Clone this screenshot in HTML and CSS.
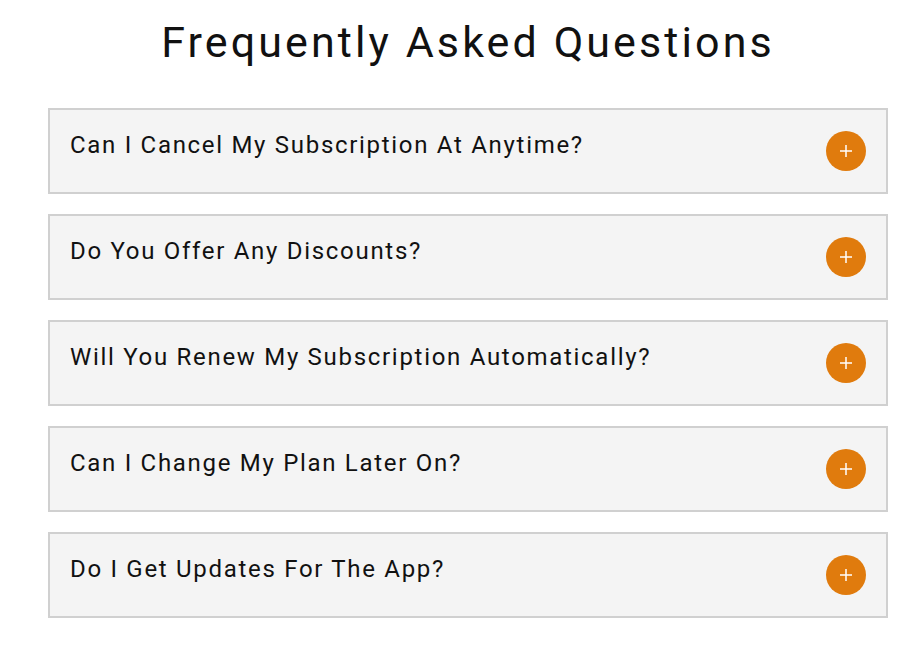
FILE: index.html
```html
<!DOCTYPE html>
<html lang="en">
<head>
<meta charset="utf-8">
<title>FAQ</title>
<link rel="stylesheet" href="styles.css">
</head>
<body>
<section class="faq">
  <h1 class="faq-title">Frequently Asked Questions</h1>
  <div class="faq-list">
    <div class="faq-item">
      <span class="faq-q">Can I Cancel My Subscription At Anytime?</span>
      <span class="faq-toggle"><svg viewBox="0 0 40 40" width="40" height="40"><path d="M20 14v12M14 20h12" stroke="#fff" stroke-width="1.5" fill="none"/></svg></span>
    </div>
    <div class="faq-item">
      <span class="faq-q">Do You Offer Any Discounts?</span>
      <span class="faq-toggle"><svg viewBox="0 0 40 40" width="40" height="40"><path d="M20 14v12M14 20h12" stroke="#fff" stroke-width="1.5" fill="none"/></svg></span>
    </div>
    <div class="faq-item">
      <span class="faq-q">Will You Renew My Subscription Automatically?</span>
      <span class="faq-toggle"><svg viewBox="0 0 40 40" width="40" height="40"><path d="M20 14v12M14 20h12" stroke="#fff" stroke-width="1.5" fill="none"/></svg></span>
    </div>
    <div class="faq-item">
      <span class="faq-q">Can I Change My Plan Later On?</span>
      <span class="faq-toggle"><svg viewBox="0 0 40 40" width="40" height="40"><path d="M20 14v12M14 20h12" stroke="#fff" stroke-width="1.5" fill="none"/></svg></span>
    </div>
    <div class="faq-item">
      <span class="faq-q">Do I Get Updates For The App?</span>
      <span class="faq-toggle"><svg viewBox="0 0 40 40" width="40" height="40"><path d="M20 14v12M14 20h12" stroke="#fff" stroke-width="1.5" fill="none"/></svg></span>
    </div>
  </div>
</section>
</body>
</html>
```

FILE: styles.css
```css
html, body {
  margin: 0;
  padding: 0;
  background: #ffffff;
}
body {
  font-family: Roboto, "Liberation Sans", sans-serif;
  color: #111111;
}
.faq {
  width: 840px;
  margin-left: 48px;
  padding-top: 18px;
}
.faq-title {
  margin: 0 0 42px;
  text-align: center;
  font-weight: 400;
  font-size: 43px;
  line-height: 48px;
  letter-spacing: 3.1px;
  color: #111;
}
.faq-list {
  display: flex;
  flex-direction: column;
  gap: 20px;
}
.faq-item {
  box-sizing: border-box;
  height: 86px;
  border: 2px solid #d0d0d0;
  background: #f4f4f4;
  display: flex;
  justify-content: space-between;
  align-items: center;
  padding: 0 20px;
}
.faq-q {
  align-self: flex-start;
  margin-top: 20px;
  font-size: 24px;
  line-height: 31px;
  letter-spacing: 1.7px;
  color: #111;
}
.faq-toggle {
  width: 40px;
  height: 40px;
  border-radius: 50%;
  background: #e07b0d;
  display: flex;
}
```
